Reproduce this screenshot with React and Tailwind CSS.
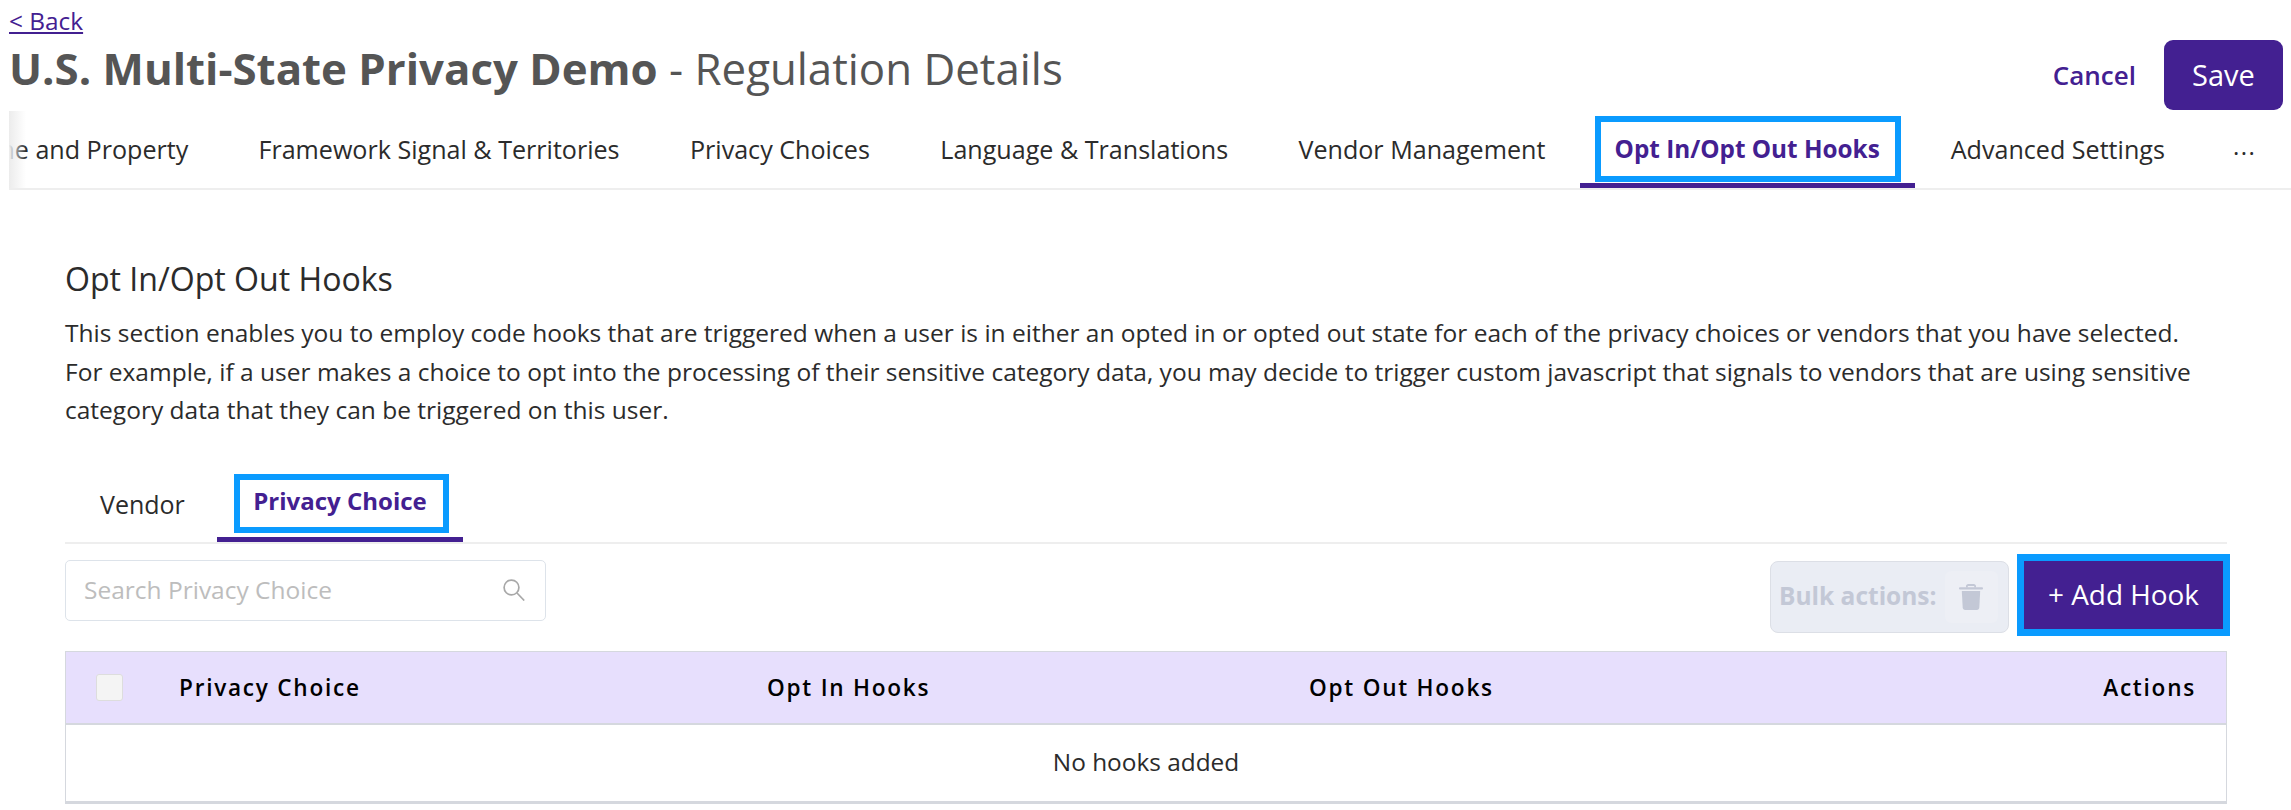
import React from "react";

const tabs = [
  "Framework Signal & Territories",
  "Privacy Choices",
  "Language & Translations",
  "Vendor Management",
];

const SearchIcon = () => (
  <svg width="22" height="22" viewBox="0 0 22 22" fill="none" stroke="#a8a8a8" strokeWidth="1.7">
    <circle cx="8.5" cy="8.5" r="7.4" />
    <path d="M14 14l7.2 7.5" />
  </svg>
);

const TrashIcon = () => (
  <svg width="24" height="26" viewBox="0 0 24 26" fill="#c3c8d6">
    <path d="M7 3.6V2.2C7 1 8 0 9.2 0h5.6C16 0 17 1 17 2.2v1.4h-1.8V1.9H8.800v1.700z" />
    <rect x="0" y="3.2" width="24" height="2.400" rx="1" />
    <path d="M2.800 7h18.400l-.9 16.600c-.1 1.400-1.100 2.400-2.400 2.400H6.100c-1.300 0-2.300-1-2.400-2.400z" />
  </svg>
);

const App = () => {
  return (
    <div className="w-[2291px] h-[810px] overflow-hidden bg-white font-['Open_Sans',sans-serif] text-[25.1px]">
      {/* header */}
      <div className="flex justify-between pl-[9px] pr-[8px] h-[111px]">
        <div>
          <a href="#" className="block text-[24.4px] leading-[22px] pt-[10px] text-[#432091] underline">
            &lt; Back
          </a>
          <h1 className="mt-[10px] text-[43.8px] leading-[52px] text-[#555555]">
            <span className="font-bold">U.S. Multi-State Privacy Demo</span> - Regulation Details
          </h1>
        </div>
        <div className="flex items-start pt-[40px]">
          <button className="h-[70px] mr-[28px] font-semibold text-[#432091] text-[26px]">Cancel</button>
          <button className="w-[119px] h-[70px] rounded-[9px] bg-[#432091] text-white text-[29px]">Save</button>
        </div>
      </div>

      {/* main tab strip */}
      <div className="relative ml-[9px] flex h-[79px] overflow-hidden border-b-2 border-[#eeeeee] text-[#2b2b2b]">
        <div className="absolute left-0 top-0 bottom-0 w-[17px] bg-gradient-to-r from-[#ececec] to-transparent z-10" />
        <div className="flex -ml-[184px] shrink-0">
          <div className="px-[35px] pt-[20px] whitespace-nowrap">Domain Name and Property</div>
          {tabs.map((t) => (
            <div key={t} className="px-[35.2px] pt-[20px] whitespace-nowrap">{t}</div>
          ))}
          <div className="relative -ml-[1px] px-[35px] pt-[20px] font-bold text-[24.3px] text-[#432091] whitespace-nowrap border-b-[5px] border-[#432091]">
            Opt In/Opt Out Hooks
            <div className="absolute left-[15px] right-[14px] top-[5px] h-[66px] border-[6px] border-[#0a9bff]" />
          </div>
          <div className="ml-[1px] px-[35px] pt-[20px] whitespace-nowrap">Advanced Settings</div>
          <div className="pl-[33px] pt-[17px] text-[24px] tracking-[1.5px]">...</div>
        </div>
      </div>

      {/* content */}
      <div className="pl-[65px] pr-[64px]">
        <h2 className="mt-[69px] text-[32.1px] leading-[40px] font-medium text-[#2b2b2b]">Opt In/Opt Out Hooks</h2>
        <p className="mt-[15px] text-[24.5px] text-[#2b2b2b] leading-[38.5px] whitespace-nowrap">
          This section enables you to employ code hooks that are triggered when a user is in either an opted in or opted out state for each of the privacy choices or vendors that you have selected.
          <br />
          For example, if a user makes a choice to opt into the processing of their sensitive category data, you may decide to trigger custom javascript that signals to vendors that are using sensitive
          <br />
          category data that they can be triggered on this user.
        </p>

        {/* sub tabs */}
        <div className="flex h-[73px] mt-[41px] border-b-2 border-[#eeeeee] text-[#2b2b2b]">
          <div className="w-[152px] pt-[15px] pl-[35px] text-[25px]">Vendor</div>
          <div className="relative w-[246px] pt-[12px] text-center font-bold text-[#432091] text-[24px] border-b-[5px] border-[#432091]">
            Privacy Choice
            <div className="absolute left-[17px] right-[14px] top-[3px] h-[59px] border-[6px] border-[#0a9bff]" />
          </div>
        </div>

        {/* toolbar */}
        <div className="flex items-start justify-between mt-[16px]">
          <div className="flex items-center justify-between w-[481px] h-[61px] pl-[18px] pr-[20px] rounded-[5px] border border-[#dde3ea] text-[24.5px] text-[#bdbdbd]">
            Search Privacy Choice
            <SearchIcon />
          </div>
          <div className="flex mt-[1px] -mr-[3px]">
            <div className="flex items-center w-[239px] h-[72px] pl-[8px] rounded-[8px] border border-[#dcdfe6] bg-[#eaedf4] font-bold text-[#c3c8d6] text-[24.5px]">
              Bulk actions:
              <div className="flex items-center justify-center ml-[8px] w-[53px] h-[52px] rounded-[6px] bg-[#edeff5]">
                <TrashIcon />
              </div>
            </div>
            <div className="ml-[8px] -mt-[7px] flex items-center justify-center w-[213px] h-[82px] border-[7px] border-[#0a9bff] bg-[#432091] text-white text-[27.9px]">
              + Add Hook
            </div>
          </div>
        </div>

        {/* table */}
        <div className="w-[2162px] mt-[15px] border border-[#d5d8de] border-b-[3px]">
          <div className="relative flex items-center h-[73px] pt-[1px] bg-[#e7dffd] border-b-2 border-[#d5d8de] font-semibold text-[22.6px] tracking-[1.75px] text-black">
            <div className="w-[27px] h-[27px] ml-[30px] rounded-[3px] border border-[#dddddd] bg-[#f4f4f4]" />
            <div className="w-[588px] ml-[56px]">Privacy Choice</div>
            <div className="w-[542px]">Opt In Hooks</div>
            <div className="flex-1">Opt Out Hooks</div>
            <div className="pr-[30px]">Actions</div>
          </div>
          <div className="flex items-center justify-center h-[76px] text-[24.4px] text-[#2b2b2b]">No hooks added</div>
        </div>
      </div>
    </div>
  );
};

export default App;
